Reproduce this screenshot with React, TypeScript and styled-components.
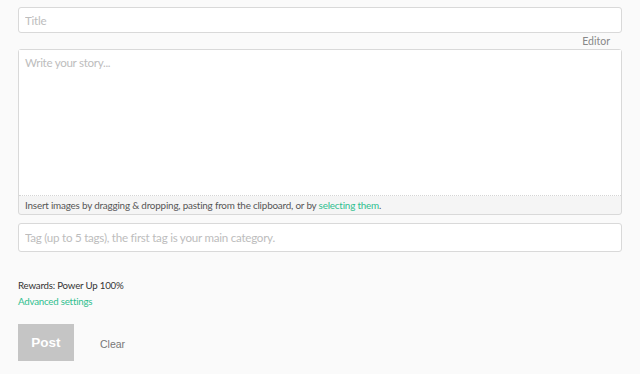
import { createGlobalStyle, styled } from "styled-components";

const GlobalStyle = createGlobalStyle`
  html, body {
    margin: 0;
    padding: 0;
    background: #fafafa;
    font-family: "Source Sans Pro", Lato, "Noto Sans", sans-serif;
  }
  * { box-sizing: border-box; }
`;

export default function App() {
  return (
    <>
      <GlobalStyle />
      <Page>
        <TextInput placeholder="Title" $height={26} />
        <EditorToggle>
          <span>Editor</span>
        </EditorToggle>
        <BodyBox>
          <StoryArea placeholder="Write your story..." />
          <DropHint>
            Insert images by dragging &amp; dropping, pasting from the clipboard, or by{" "}
            <GreenLink href="#">selecting them</GreenLink>.
          </DropHint>
        </BodyBox>
        <TagRow>
          <TextInput
            placeholder="Tag (up to 5 tags), the first tag is your main category."
            $height={29}
          />
        </TagRow>
        <Rewards>Rewards: Power Up 100%</Rewards>
        <GreenLink href="#" $small>
          Advanced settings
        </GreenLink>
        <Actions>
          <PostButton disabled>Post</PostButton>
          <ClearButton>Clear</ClearButton>
        </Actions>
      </Page>
    </>
  );
}

const Page = styled.div`
  width: 604px;
  margin-left: 18px;
  padding-top: 7px;
  display: flex;
  flex-direction: column;
`;

const TextInput = styled.input<{ $height: number }>`
  width: 100%;
  height: ${(p) => p.$height}px;
  border: 1px solid #d9d9d9;
  border-radius: 3px;
  background: #fff;
  padding: 0 6px;
  font-family: inherit;
  font-size: 11.6px;
  letter-spacing: -0.25px;
  color: #333;
  outline: none;

  &::placeholder {
    color: #bdbdbd;
  }
`;

const TagRow = styled.div`
  margin-top: 8px;
  display: flex;
`;

const EditorToggle = styled.div`
  display: flex;
  justify-content: flex-end;
  padding-right: 12px;
  height: 16px;
  align-items: center;
  font-size: 10.5px;
  color: #888;
`;

const BodyBox = styled.div`
  border: 1px solid #d9d9d9;
  border-radius: 3px;
  background: #f5f5f5;
  display: flex;
  flex-direction: column;
`;

const StoryArea = styled.textarea`
  height: 146px;
  border: none;
  border-bottom: 1px dotted #d5d5d5;
  background: #fff;
  padding: 6px 6px;
  font-family: inherit;
  font-size: 11.6px;
  letter-spacing: -0.3px;
  resize: none;
  outline: none;

  &::placeholder {
    color: #bdbdbd;
  }
`;

const DropHint = styled.div`
  height: 18px;
  padding: 0 6px;
  display: flex;
  align-items: center;
  font-size: 9.9px;
  letter-spacing: -0.2px;
  color: #555;
  white-space: pre;
`;

const GreenLink = styled.a<{ $small?: boolean }>`
  color: #2fbf8f;
  text-decoration: none;
  font-size: ${(p) => (p.$small ? "9.7px" : "inherit")};
  letter-spacing: -0.2px;
  line-height: 16px;
`;

const Rewards = styled.div`
  margin-top: 25px;
  font-size: 9.7px;
  letter-spacing: -0.2px;
  color: #333;
  line-height: 16px;
`;

const Actions = styled.div`
  margin-top: 15px;
  display: flex;
  align-items: center;
  gap: 26px;
`;

const PostButton = styled.button`
  width: 56px;
  height: 37px;
  border: none;
  background: #c5c5c5;
  color: #fff;
  font-family: "Liberation Sans", Arial, sans-serif;
  font-weight: 700;
  font-size: 13.5px;
  padding: 0;
`;

const ClearButton = styled.button`
  border: none;
  background: none;
  padding: 0;
  margin-top: 3px;
  color: #777;
  font-family: "Liberation Sans", Arial, sans-serif;
  font-size: 10.5px;
`;
